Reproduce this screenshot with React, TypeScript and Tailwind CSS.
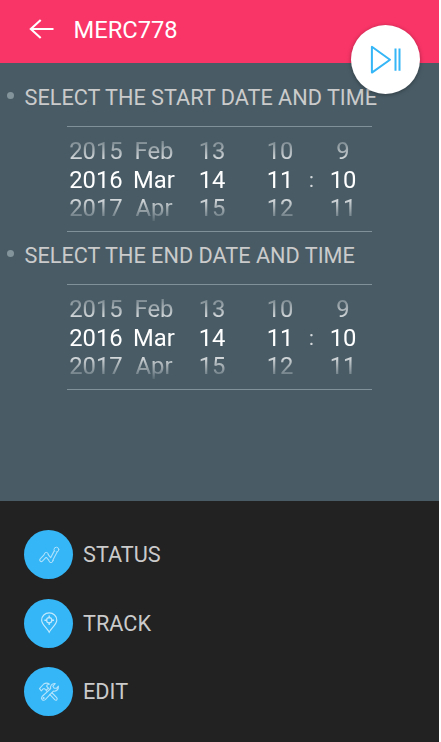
import type { ReactNode } from "react";

interface PickerColumnProps {
  values: string[];
  className: string;
}

function PickerColumn({ values, className }: PickerColumnProps) {
  return (
    <div className={`flex flex-col text-center ${className}`}>
      {values.map((value) => (
        <span key={value} className="h-[28.5px] leading-[28.5px]">
          {value}
        </span>
      ))}
    </div>
  );
}

function DateTimePicker() {
  return (
    <div className="ml-[67px] w-[305px] h-[106px] border-y border-[#80919a] pt-[10px]">
      <div className="flex text-[23.8px] text-white [mask-image:linear-gradient(to_bottom,transparent_-6px,black_31px,black_55px,transparent_87px)]">
        <PickerColumn values={["2015", "2016", "2017"]} className="w-[58px]" />
        <PickerColumn values={["Feb", "Mar", "Apr"]} className="w-[58px]" />
        <PickerColumn values={["13", "14", "15"]} className="w-[58px]" />
        <PickerColumn values={["10", "11", "12"]} className="ml-[10px] w-[58px]" />
        <span className="-mx-1 w-[12px] self-center pl-px text-center text-xl text-[#d5d9dc]">:</span>
        <PickerColumn values={["9", "10", "11"]} className="ml-px w-[58px]" />
      </div>
    </div>
  );
}

function SectionHeading({ children }: { children: ReactNode }) {
  return (
    <div className="flex h-[52px] items-center pb-[3px] pl-[7px]">
      <span className="mb-[7px] size-[7px] rounded-full bg-[#84949b]" />
      <h2 className="ml-[10.5px] whitespace-nowrap text-[21.7px] text-[#cbcbcb]">{children}</h2>
    </div>
  );
}

function MenuItem({ icon, label }: { icon: ReactNode; label: string }) {
  return (
    <button type="button" className="flex items-center gap-[10px] text-[21.7px] text-[#cbcbcb]">
      <span className="flex size-[49px] items-center justify-center rounded-full bg-[#35b6f6]">
        {icon}
      </span>
      <span className="pt-[2.5px]">{label}</span>
    </button>
  );
}

function StatusIcon() {
  return (
    <svg width="22" height="20" viewBox="0 0 22 20" fill="none" strokeLinecap="round" strokeLinejoin="round">
      <g stroke="#aee1fc" fill="#35b6f6">
        <path d="M3.3 15 8.3 9.8 13 15.4 18.4 5" fill="none" strokeWidth="4.2" />
        <circle cx="8.3" cy="9.4" r="2" />
        <circle cx="13" cy="15.6" r="2" />
        <circle cx="18.4" cy="4.6" r="2.4" />
      </g>
      <path d="M3.3 15 8.3 9.8 13 15.4 17.3 7.2" stroke="#35b6f6" strokeWidth="2" />
    </svg>
  );
}

function TrackIcon() {
  return (
    <svg width="18" height="22" viewBox="0 0 18 22" fill="none" stroke="#c2e9fd" strokeWidth="1.15">
      <path d="M9.2 20.2C7.9 17.3 1.6 12.1 1.6 8.2a7.6 7.3 0 0 1 15.2 0C16.8 12.1 10.5 17.3 9.2 20.2Z" />
      <circle cx="9.2" cy="8.2" r="2.6" />
      <path d="M9.2 3.4v2.8M9.2 10.2v2.8M4.4 8.2h2.8M11.2 8.2h2.8" strokeWidth="1.4" />
    </svg>
  );
}

function ToolsIcon() {
  return (
    <svg width="22" height="20" viewBox="0 0 22 20" fill="none" stroke="#b5e4fc" strokeWidth="1.1" strokeLinejoin="round">
      {/* hammer */}
      <path d="M1.5 6.7 5.7 2C7.6.8 10 1.1 11.5 2.1L9 2.9 8.8 4.5 10.4 6.1 8.2 8.3 6.5 6.7 5.1 6.8 3.3 8.8Z" />
      <path d="m11.5 12.1 5.2 5.6c1.5 1.4 3.4-.5 2-2l-5-5.2M8.2 8.3l1.4 1.5M10.4 6.1l1.4 1.5" />
      {/* wrench */}
      <path d="M4.1 14.5 12.7 6.7C11.8 3.8 14.1 1.2 17.2 1.6L14.9 4.2 16.2 6.3 18.7 6.2 20.4 4.2C20.8 7.3 18.3 9.6 15.4 9.1L7.2 17.6C5.1 19.4 2.2 16.7 4.1 14.5Z" />
      <circle cx="5.6" cy="16.1" r=".6" />
    </svg>
  );
}

export default function App() {
  return (
    <div className="h-[742px] w-[441px] overflow-hidden bg-white font-['Roboto',sans-serif]">
      <div className="relative flex h-full w-[439px] flex-col bg-[#495c66]">
        <header className="flex h-[63px] items-center bg-[#f93567] pb-[3px] pl-[29px]">
          <svg className="mb-[3px]" width="25" height="20" viewBox="0 0 25 20" fill="none" stroke="white" strokeWidth="2.1">
            <path d="M24.5 10H2M11.7 .9 1.8 10l9.9 9.1" />
          </svg>
          <h1 className="ml-[19.5px] pt-[2px] text-[23.7px] text-white">MERC778</h1>
        </header>

        <main className="h-[438px] pt-[11px]">
          <SectionHeading>SELECT THE START DATE AND TIME</SectionHeading>
          <DateTimePicker />
          <SectionHeading>SELECT THE END DATE AND TIME</SectionHeading>
          <DateTimePicker />
        </main>

        <nav className="flex flex-1 flex-col items-start gap-[19.5px] bg-[#222222] pl-6 pt-[29px]">
          <MenuItem icon={<StatusIcon />} label="STATUS" />
          <MenuItem icon={<TrackIcon />} label="TRACK" />
          <MenuItem icon={<ToolsIcon />} label="EDIT" />
        </nav>

        {/* Floating play / pause button */}
        <button
          type="button"
          aria-label="Play or pause"
          className="absolute left-[351px] top-[25px] flex size-[69px] items-center justify-center rounded-full bg-white shadow-[0_1px_4px_rgba(0,0,0,0.35)]"
        >
          <svg width="32" height="30" viewBox="0 0 32 30" fill="none" stroke="#35b6f6" strokeWidth="2" strokeLinejoin="round">
            <path d="M1.9 1.8v25.8L20 14.7Z" />
            <path d="M25.5 3.5v22.3M29.5 3.5v22.3" />
          </svg>
        </button>
      </div>
    </div>
  );
}
